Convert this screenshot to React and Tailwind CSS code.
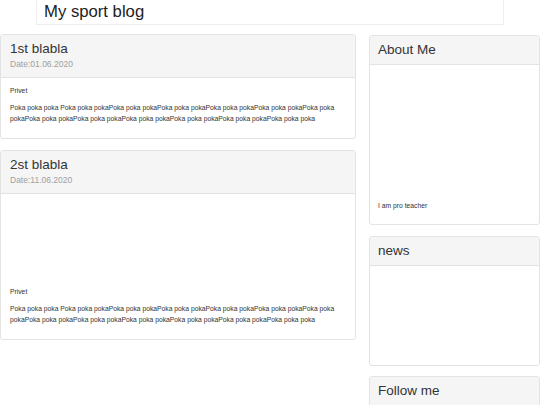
import React from "react";

const font = { fontFamily: '"Liberation Sans", Arial, sans-serif' };

function Post({ title, date, spacer }) {
  return (
    <div className="rounded-[3px] border border-[#e3e3e3] bg-white">
      <div className="border-b border-[#e3e3e3] bg-[#f5f5f5] px-[9px] pt-[5px] pb-[7px]">
        <div className="text-[13.5px] leading-[18px] text-[#333]">{title}</div>
        <div className="text-[8.5px] leading-[12px] text-[#a0a0a0]">{date}</div>
      </div>
      <div className="px-[9px] pt-[8px] pb-[14px] text-[6.75px] text-[#333]">
        {spacer ? <div className="h-[85px]" /> : null}
        <div className="leading-[10px]">Privet</div>
        <p className="mt-[6px] leading-[11px]">
          Poka poka poka Poka poka pokaPoka poka pokaPoka poka pokaPoka poka pokaPoka poka pokaPoka poka
          pokaPoka poka pokaPoka poka pokaPoka poka pokaPoka poka pokaPoka poka pokaPoka poka poka
        </p>
      </div>
    </div>
  );
}

function Side({ title, children, bodyClass, className = "" }) {
  return (
    <div className={"rounded-[3px] border border-[#e3e3e3] bg-white " + className}>
      <div className="border-b border-[#e3e3e3] bg-[#f5f5f5] px-[8px] py-[5px] text-[13.5px] leading-[18px] text-[#333]">
        {title}
      </div>
      <div className={bodyClass}>{children}</div>
    </div>
  );
}

export default function App() {
  return (
    <div className="h-[405px] w-[540px] overflow-hidden bg-white antialiased" style={font}>
      <div className="ml-[36px] h-[25px] w-[468px] border border-t-0 border-[#eee] pl-[7px] text-[16.7px] leading-[24px] text-[#222]">
        My sport blog
      </div>
      <div className="mt-[9px] flex">
        <div className="flex w-[356px] flex-col gap-[11px]">
          <Post title="1st blabla" date="Date:01.06.2020" />
          <Post title="2st blabla" date="Date:11.06.2020" spacer />
        </div>
        <div className="mt-[1px] ml-[13px] flex w-[171px] flex-col gap-[11px]">
          <Side title="About Me" bodyClass="px-[8px] pt-[8px] pb-[13px]">
            <div className="h-[128px]" />
            <div className="text-[6.75px] leading-[10px] text-[#333]">I am pro teacher</div>
          </Side>
          <Side title="news" bodyClass="h-[99px]" />
          <Side title="Follow me" bodyClass="h-[60px]" className="-mt-[1px]" />
        </div>
      </div>
    </div>
  );
}
